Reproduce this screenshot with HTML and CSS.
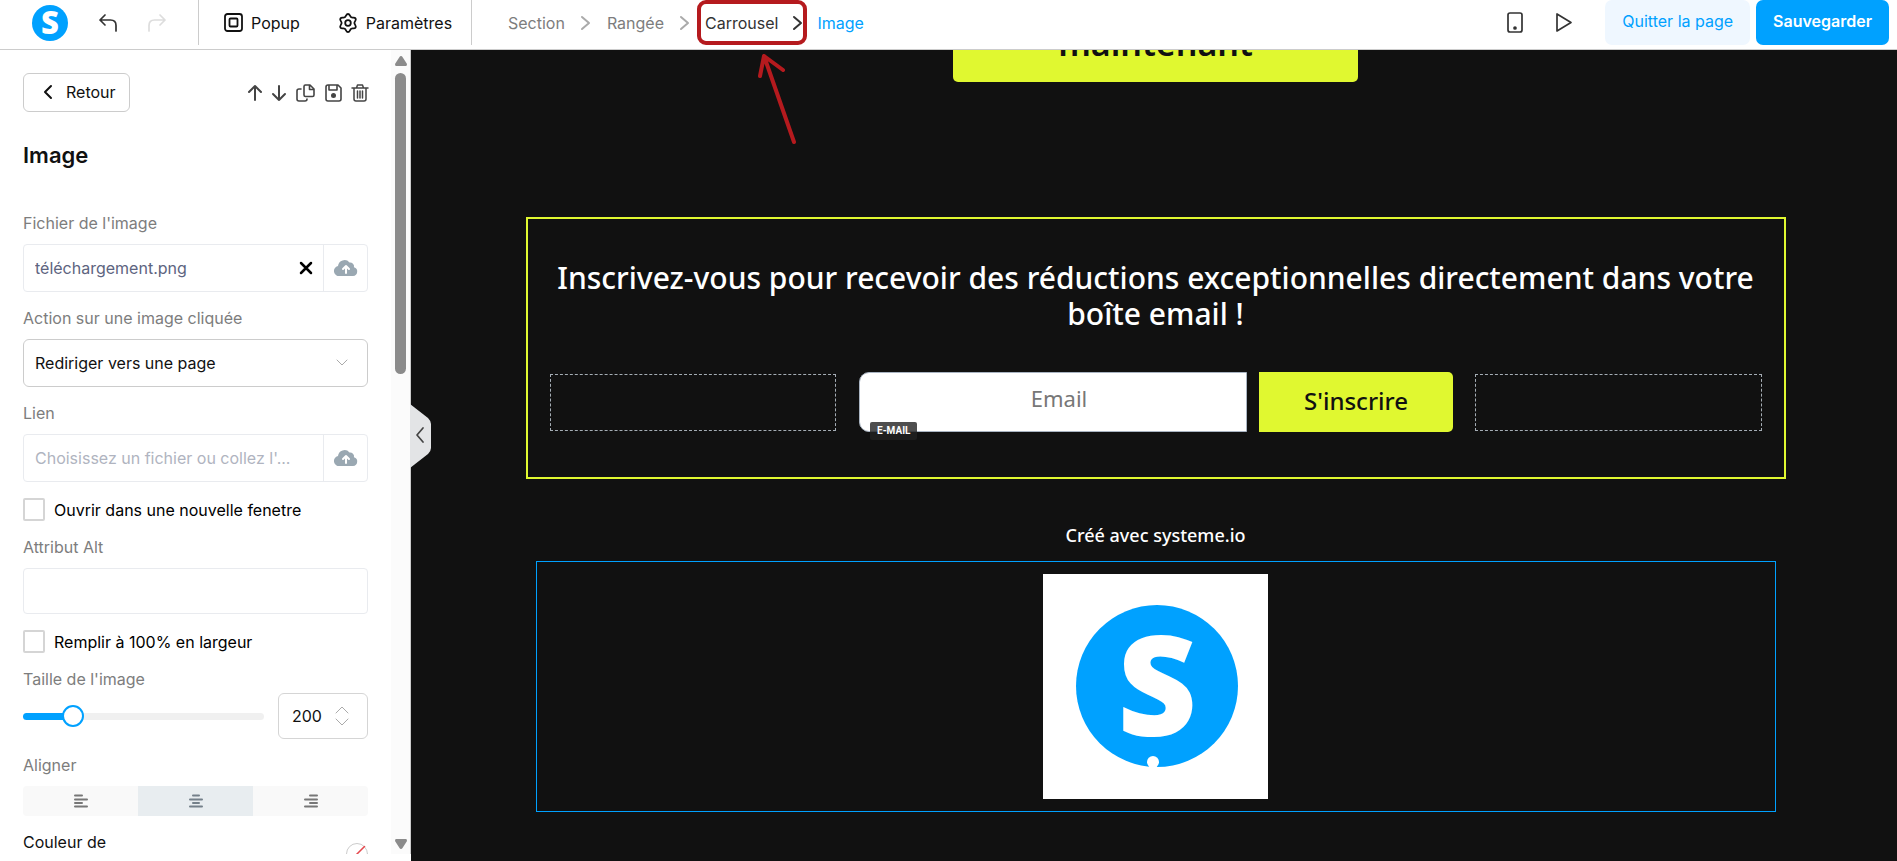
FILE: index.html
```html
<!DOCTYPE html>
<html lang="fr">
<head>
    <meta charset="UTF-8">
    <meta name="viewport" content="width=device-width, initial-scale=1.0">
    <title>Éditeur de page</title>
    <link rel="stylesheet" href="styles.css">
</head>
<body>

    <!-- Top bar -->
    <header class="topbar">
        <div class="history">
            <a href="#" class="brand" aria-label="Accueil">
                <svg width="36" height="36" viewBox="0 0 36 36"><circle cx="18" cy="18" r="18" fill="#00a1ff"/><text x="18" y="29" class="logo-letter" font-size="31" text-anchor="middle">S</text></svg>
            </a>
            <button class="icon-btn" aria-label="Annuler">
                <svg width="18" height="18" viewBox="0 0 18 18"><path d="M6 1 1 6l5 5M1 6h10.500q5.500 0 5.500 5.500V17"/></svg>
            </button>
            <button class="icon-btn muted" aria-label="Rétablir">
                <svg width="18" height="18" viewBox="0 0 18 18"><path d="M12 1l5 5-5 5M17 6H6.500Q1 6 1 11.500V17"/></svg>
            </button>
        </div>
        <div class="tools">
            <button class="tool">
                <svg width="19" height="19" viewBox="0 0 19 19" stroke-width="1.800"><rect x="1" y="1" width="17" height="17" rx="2.500"/><rect x="5.500" y="5.500" width="8" height="8" rx="1"/></svg>
                Popup
            </button>
            <button class="tool">
                <svg width="20" height="20" viewBox="0 0 20 20" stroke-width="1.800"><path d="M10 1C12 1 11.800 3.500 13.200 4.300C14.600 5.100 16.600 3.700 17.600 5.500C18.600 7.300 16.400 8.300 16.400 10C16.400 11.700 18.600 12.700 17.600 14.500C16.600 16.300 14.600 14.900 13.200 15.700C11.800 16.500 12 19 10 19C8 19 8.200 16.500 6.800 15.700C5.400 14.900 3.400 16.300 2.400 14.500C1.400 12.700 3.600 11.700 3.600 10C3.600 8.300 1.400 7.300 2.400 5.500C3.400 3.700 5.400 5.100 6.800 4.300C8.200 3.500 8 1 10 1Z"/><circle cx="10" cy="10" r="2.800"/></svg>
                Paramètres
            </button>
        </div>
        <nav class="breadcrumb">
            <a href="#">Section</a>
            <svg width="10" height="14" viewBox="0 0 10 14"><path d="M1 1l7 6-7 6"/></svg>
            <a href="#">Rangée</a>
            <svg width="10" height="14" viewBox="0 0 10 14"><path d="M1 1l7 6-7 6"/></svg>
            <span class="marked">
                <a href="#">Carrousel</a>
                <svg width="10" height="14" viewBox="0 0 10 14"><path d="M1 1l7 6-7 6"/></svg>
                <svg class="arrow" width="44" height="96" viewBox="0 0 44 96"><path d="M12 6 42 92M8 26 12 6l19 14"/></svg>
            </span>
            <a href="#" class="current">Image</a>
        </nav>
        <div class="actions">
            <button class="icon-btn" aria-label="Vue mobile">
                <svg width="16" height="22" viewBox="0 0 16 22"><rect x="1" y="1" width="14" height="19" rx="2"/><circle cx="8" cy="16" r="1" fill="currentColor"/></svg>
            </button>
            <button class="icon-btn" aria-label="Aperçu">
                <svg width="18" height="22" viewBox="0 0 18 22"><path d="M2 2v17l14-8.500z"/></svg>
            </button>
            <button class="btn light">Quitter la page</button>
            <button class="btn primary">Sauvegarder</button>
        </div>
    </header>

    <main class="workspace">

        <!-- Settings panel -->
        <aside class="sidebar">
            <div class="panel">
                <div class="panel-top">
                    <button class="back">
                        <svg width="9" height="14" viewBox="0 0 9 14"><path d="M8 1 2 7l6 6"/></svg>
                        Retour
                    </button>
                    <div class="panel-icons">
                        <button aria-label="Monter"><svg width="14" height="18" viewBox="0 0 14 18"><path d="M7 16V2M1 8l6-6 6 6"/></svg></button>
                        <button aria-label="Descendre"><svg width="14" height="18" viewBox="0 0 14 18"><path d="M7 2v14M1 10l6 6 6-6"/></svg></button>
                        <button aria-label="Dupliquer"><svg width="19" height="18" viewBox="0 0 19 18" stroke-width="1.600"><path d="M9 1h5l4 4v6q0 1.500-1.500 1.500H9.500Q8 12.500 8 11V2.500Q8 1 9.500 1M13.500 1v4.500H18M5 5H3Q1 5 1 7v8q0 2 2 2h6q2 0 2-2"/></svg></button>
                        <button aria-label="Enregistrer"><svg width="17" height="18" viewBox="0 0 17 18" stroke-width="1.600"><path d="M1 3q0-2 2-2h10l3 3v11q0 2-2 2H3q-2 0-2-2zM4 1v5h8V1"/><circle cx="8.500" cy="11.500" r="1.700" fill="currentColor"/></svg></button>
                        <button aria-label="Supprimer"><svg width="16" height="18" viewBox="0 0 16 18" stroke-width="1.500"><path d="M0 4h16M4.500 4l1-3h5l1 3M2 4v11q0 2 2 2h8q2 0 2-2V4M5.500 7v7M8 7v7M10.500 7v7"/></svg></button>
                    </div>
                </div>

                <h1>Image</h1>

                <div class="field">
                    <label for="file">Fichier de l'image</label>
                    <div class="file-box">
                        <input type="text" id="file" value="téléchargement.png">
                        <button class="clear" aria-label="Effacer"><svg width="12" height="12" viewBox="0 0 12 12"><path d="M1 1l10 10M11 1 1 11"/></svg></button>
                        <button class="upload" aria-label="Téléverser"><svg width="24" height="18" viewBox="0 0 24 18"><path d="M6 17a5 5 0 0 1-2-10A6.500 6.500 0 0 1 15.500 3.500 4 4 0 0 1 20 8.200 4.500 4.500 0 0 1 19 17z" fill="#9aa8b2"/><path d="M12 14V7M9 10l3-3 3 3" stroke="#fff" stroke-width="2"/></svg></button>
                    </div>
                </div>

                <div class="field">
                    <label for="action">Action sur une image cliquée</label>
                    <div class="select-box">
                        <select id="action">
                            <option>Rediriger vers une page</option>
                        </select>
                        <svg width="12" height="8" viewBox="0 0 12 8"><path d="M1 1l5 5 5-5"/></svg>
                    </div>
                </div>

                <div class="field">
                    <label for="link">Lien</label>
                    <div class="file-box">
                        <input type="text" id="link" placeholder="Choisissez un fichier ou collez l'...">
                        <button class="upload" aria-label="Téléverser"><svg width="24" height="18" viewBox="0 0 24 18"><path d="M6 17a5 5 0 0 1-2-10A6.500 6.500 0 0 1 15.500 3.500 4 4 0 0 1 20 8.200 4.500 4.500 0 0 1 19 17z" fill="#9aa8b2"/><path d="M12 14V7M9 10l3-3 3 3" stroke="#fff" stroke-width="2"/></svg></button>
                    </div>
                </div>

                <label class="check"><input type="checkbox"> Ouvrir dans une nouvelle fenetre</label>

                <div class="field">
                    <label for="alt">Attribut Alt</label>
                    <input type="text" id="alt" class="text-input">
                </div>

                <label class="check"><input type="checkbox"> Remplir à 100% en largeur</label>

                <div class="field size">
                    <label for="size">Taille de l'image</label>
                    <div class="size-row">
                        <input type="range" id="size" min="0" max="1000" value="180">
                        <div class="number-box">
                            <input type="text" value="200" aria-label="Taille en pixels">
                            <svg width="14" height="20" viewBox="0 0 14 20"><path d="M1 7l6-6 6 6M1 13l6 6 6-6"/></svg>
                        </div>
                    </div>
                </div>

                <div class="field">
                    <span class="label">Aligner</span>
                    <div class="segments">
                        <button aria-label="Gauche"><svg width="14" height="14" viewBox="0 0 14 14"><path d="M1 1.500h7M1 5.500h12M1 9h7M1 12.500h12"/></svg></button>
                        <button class="active" aria-label="Centre"><svg width="14" height="14" viewBox="0 0 14 14"><path d="M4 1.500h6M1 5.500h12M4 9h6M1 12.500h12"/></svg></button>
                        <button aria-label="Droite"><svg width="14" height="14" viewBox="0 0 14 14"><path d="M6 1.500h7M1 5.500h12M6 9h7M1 12.500h12"/></svg></button>
                    </div>
                </div>

                <div class="color-row">
                    <span>Couleur de</span>
                    <button class="swatch" aria-label="Couleur"><svg width="22" height="22" viewBox="0 0 22 22"><circle cx="11" cy="11" r="10.500" stroke="#ccc"/><path d="M3.500 18.500l15-15" stroke="#e5484d" stroke-width="1.500"/></svg></button>
                </div>
            </div>
            <div class="scrollbar">
                <svg width="12" height="10" viewBox="0 0 12 10"><path d="M6 0q1 0 1.500 1L12 8q0 2-1 2H1Q0 10 0 8l4.500-7Q5 0 6 0z"/></svg>
                <div class="thumb"></div>
                <svg width="12" height="10" viewBox="0 0 12 10"><path d="M6 10q1 0 1.500-1L12 2q0-2-1-2H1Q0 0 0 2l4.500 7q.5 1 1.500 1z"/></svg>
            </div>
            <button class="collapse" aria-label="Replier"><svg width="21" height="64" viewBox="0 0 21 64"><path d="M0 0 18 14q3 3 3 6v24q0 3-3 6L0 64z" fill="#e3e4e6" stroke="none"/><path d="M13 24 7 31l6 7"/></svg></button>
        </aside>

        <!-- Page being edited -->
        <section class="canvas">
            <div class="cta-clip">
                <button class="cta">maintenant</button>
            </div>

            <div class="signup">
                <h2>Inscrivez-vous pour recevoir des réductions exceptionnelles directement dans votre boîte email !</h2>
                <form class="signup-row">
                    <div class="slot"></div>
                    <div class="email">
                        <input type="email" placeholder="Email" aria-label="Email">
                        <span class="badge">E-MAIL</span>
                    </div>
                    <button type="button" class="submit">S'inscrire</button>
                    <div class="slot"></div>
                </form>
            </div>

            <p class="credit">Créé avec systeme.io</p>

            <div class="carousel">
                <svg width="225" height="225" viewBox="0 0 225 225"><rect width="225" height="225" fill="#fff"/><circle cx="114" cy="112" r="81" fill="#00a1ff"/><text x="114" y="162" class="logo-letter" font-size="138" text-anchor="middle">S</text><circle cx="110" cy="188" r="6" fill="#fff"/></svg>
            </div>
        </section>
    </main>

</body>
</html>
```
FILE: styles.css
```css
/* Root Variables */
:root {
    --blue: #00a1ff;
    --lime: #e0f830;
    --dark: #111111;
    --border: #cccccc;
    --light-border: #e9ebef;
    --gray: #7d7d7d;
    --red: #b51a1e;
}

/* General Styles */
* {
    box-sizing: border-box;
}

body {
    margin: 0;
    height: 100vh;
    display: flex;
    flex-direction: column;
    overflow: hidden;
    background: white;
    color: #111;
    font-family: Inter, sans-serif;
    font-size: 16px;
    line-height: 20px;
}

button, input, select {
    font: inherit;
    color: inherit;
    margin: 0;
    padding: 0;
    border: none;
    background: none;
}

button {
    cursor: pointer;
}

a {
    color: inherit;
    text-decoration: none;
}

svg {
    display: block;
    flex: none;
    overflow: visible;
    fill: none;
    stroke: currentColor;
    stroke-linecap: round;
    stroke-linejoin: round;
}

.logo-letter {
    font-family: "Open Sans", sans-serif;
    font-weight: 800;
    fill: white;
    stroke: none;
}

circle[fill="#00a1ff"], circle[fill="#fff"], rect[fill="#fff"] {
    stroke: none;
}

/* Top bar */
.topbar {
    height: 50px;
    flex: none;
    display: flex;
    align-items: flex-start;
    border-bottom: 1px solid var(--border);
}

.history, .tools, .breadcrumb, .actions {
    display: flex;
    align-items: center;
    height: 45px;
}

.history {
    width: 199px;
    padding-left: 32px;
    gap: 31px;
    border-right: 1px solid var(--border);
}

.topbar .icon-btn {
    color: #333;
    stroke-width: 1.7;
}

.topbar .icon-btn.muted {
    color: #ddd;
}

.tools {
    width: 273px;
    padding-left: 25px;
    gap: 38px;
    border-right: 1px solid var(--border);
}

.tool {
    display: flex;
    align-items: center;
    gap: 8px;
}

.breadcrumb {
    padding-left: 36px;
    gap: 16px;
    color: var(--gray);
}

.breadcrumb svg {
    color: #aaa;
    stroke-width: 2;
}

.marked {
    position: relative;
    display: flex;
    align-items: center;
    gap: 15px;
    height: 45px;
    margin: 0 -6px 0 -9px;
    padding: 0 0 0 4px;
    border: 4px solid var(--red);
    border-radius: 9px;
    color: #333;
}

.marked svg {
    color: #333;
}

.marked .arrow {
    position: absolute;
    left: 51px;
    top: 46px;
    z-index: 2;
    color: var(--red);
    stroke-width: 4;
}

.breadcrumb .current {
    color: var(--blue);
}

.actions {
    margin-left: auto;
    padding-right: 8px;
}

.actions .icon-btn {
    margin-right: 32px;
}

.btn {
    height: 45px;
    padding: 0 17px 3px;
    border-radius: 7px;
}

.light {
    margin-right: 6px;
    background: #eff7ff;
    color: var(--blue);
}

.primary {
    background: var(--blue);
    color: white;
    font-weight: 600;
}

/* Settings panel */
.workspace {
    flex: 1;
    min-height: 0;
    display: flex;
}

.sidebar {
    position: relative;
    width: 411px;
    flex: none;
    display: flex;
    margin-bottom: 7px;
    border-right: 1px solid var(--border);
}

.panel {
    flex: 1;
    padding: 23px 23px 0;
    overflow: hidden;
}

.panel-top {
    display: flex;
    justify-content: space-between;
    align-items: center;
}

.back {
    display: flex;
    align-items: center;
    gap: 14px;
    height: 39px;
    padding: 0 13px 2px 19px;
    border: 1px solid var(--border);
    border-radius: 6px;
    stroke-width: 2;
}

.panel-icons {
    display: flex;
    gap: 10px;
    color: #444;
    stroke-width: 2;
}

.panel h1 {
    margin: 31px 0 46px;
    font-size: 22px;
    line-height: 24px;
    font-weight: 600;
}

.field {
    margin-bottom: 16px;
}

.field label, .label {
    display: block;
    margin-bottom: 11px;
    color: var(--gray);
}

.file-box {
    display: flex;
    height: 48px;
    border: 1px solid var(--light-border);
    border-radius: 4px;
}

.file-box input {
    flex: 1;
    min-width: 0;
    padding-left: 11px;
    color: #5d6480;
}

.file-box input::placeholder {
    color: #b0b4c0;
    opacity: 1;
}

.clear {
    width: 34px;
    color: black;
    stroke-width: 2.5;
}

.clear svg, .upload svg {
    margin: auto;
}

.upload {
    width: 44px;
    border-left: 1px solid var(--light-border);
}

.upload path:first-child {
    stroke: none;
}

.select-box {
    display: grid;
    align-items: center;
}

.select-box > * {
    grid-area: 1 / 1;
}

.select-box select {
    height: 48px;
    padding: 0 11px;
    border: 1px solid var(--border);
    border-radius: 6px;
    appearance: none;
}

.select-box svg {
    justify-self: end;
    margin-right: 20px;
    color: #aaa;
    pointer-events: none;
}

.check {
    display: flex;
    align-items: center;
    gap: 9px;
    height: 23px;
    margin-bottom: 16px;
    color: black;
}

.check input {
    width: 22px;
    height: 23px;
    border: 2px solid #d5d5d5;
    border-radius: 2px;
    appearance: none;
}

.text-input {
    display: block;
    width: 100%;
    height: 46px;
    padding: 0 11px;
    border: 1px solid var(--light-border);
    border-radius: 4px;
}

.size label {
    margin-bottom: 4px;
}

.size-row {
    display: flex;
    align-items: center;
    gap: 14px;
}

.size-row input[type="range"] {
    flex: 1;
    min-width: 0;
    height: 22px;
    appearance: none;
}

.size-row input::-webkit-slider-runnable-track {
    height: 7px;
    border-radius: 4px;
    background: linear-gradient(to right, var(--blue) 20%, #f0f0f0 20%);
}

.size-row input::-webkit-slider-thumb {
    width: 22px;
    height: 22px;
    margin-top: -8px;
    border: 2px solid var(--blue);
    border-radius: 50%;
    background: white;
    appearance: none;
}

.number-box {
    display: flex;
    align-items: center;
    justify-content: space-between;
    width: 90px;
    height: 46px;
    padding: 0 18px 0 13px;
    border: 1px solid #d5d5d5;
    border-radius: 6px;
}

.number-box input {
    width: 34px;
}

.number-box svg {
    color: #aaa;
}

.segments {
    display: flex;
    height: 30px;
    border-radius: 4px;
    background: #f9f9f9;
    overflow: hidden;
}

.segments button {
    flex: 1;
    color: #777;
    stroke-width: 2;
}

.segments svg {
    margin: auto;
}

.segments .active {
    background: #e8edf0;
    color: #74808a;
}

.color-row {
    display: flex;
    justify-content: space-between;
}

.swatch {
    margin-top: 11px;
}

.scrollbar {
    width: 19px;
    display: flex;
    flex-direction: column;
    align-items: center;
    padding: 6px 0 5px;
    background: #fbfbfb;
}

.scrollbar svg {
    fill: #8b8b8b;
    stroke: none;
}

.thumb {
    width: 11px;
    height: 301px;
    margin: 7px 0 auto;
    border-radius: 6px;
    background: #8b8b8b;
}

.collapse {
    position: absolute;
    left: 100%;
    top: 354px;
    z-index: 1;
    color: #444;
    stroke-width: 1.7;
}

/* Page being edited */
.canvas {
    flex: 1;
    min-width: 0;
    display: flex;
    flex-direction: column;
    align-items: center;
    padding-left: 3px;
    background: var(--dark);
    color: white;
    font-family: "Noto Sans", sans-serif;
}

.cta-clip {
    height: 32px;
    display: flex;
    align-items: flex-end;
    overflow: hidden;
}

.cta {
    width: 405px;
    height: 80px;
    flex: none;
    padding-top: 2px;
    border-radius: 5px;
    background: var(--lime);
    color: var(--dark);
    font-size: 34px;
    line-height: 40px;
    font-weight: 600;
}

.signup {
    width: 85%;
    max-width: 1260px;
    margin-top: 135px;
    padding: 41px 22px 45px;
    border: 2px solid var(--lime);
}

.signup h2 {
    margin: 0 0 40px;
    text-align: center;
    font-size: 30px;
    line-height: 36px;
    font-weight: 500;
}

.signup-row {
    display: flex;
    align-items: center;
}

.slot {
    flex: 1;
    height: 57px;
    border: 1px dashed #a5adb5;
}

.email {
    position: relative;
    width: 388px;
    margin: 0 12px 0 23px;
}

.email input {
    display: block;
    width: 100%;
    height: 60px;
    padding: 0 0 8px 12px;
    border: 1px solid #a9b4c2;
    border-radius: 10px 0 0 10px;
    background: white;
    color: #777;
    text-align: center;
    font-size: 22px;
}

.email input::placeholder {
    color: #777;
}

.badge {
    position: absolute;
    left: 11px;
    bottom: -8px;
    padding: 0 7px;
    border-radius: 2px;
    background: rgba(34, 34, 34, 0.8);
    font-family: Roboto, sans-serif;
    font-size: 10px;
    line-height: 18px;
    font-weight: 700;
}

.submit {
    width: 194px;
    height: 60px;
    margin-right: 22px;
    padding-bottom: 2px;
    border-radius: 0 5px 5px 0;
    background: var(--lime);
    color: var(--dark);
    font-size: 24px;
    font-weight: 500;
}

.credit {
    margin: 44px 0 14px;
    font-size: 18px;
    line-height: 24px;
    font-weight: 500;
}

.carousel {
    width: 84%;
    max-width: 1240px;
    display: flex;
    justify-content: center;
    padding: 12px 0;
    border: 1px solid var(--blue);
}
```
